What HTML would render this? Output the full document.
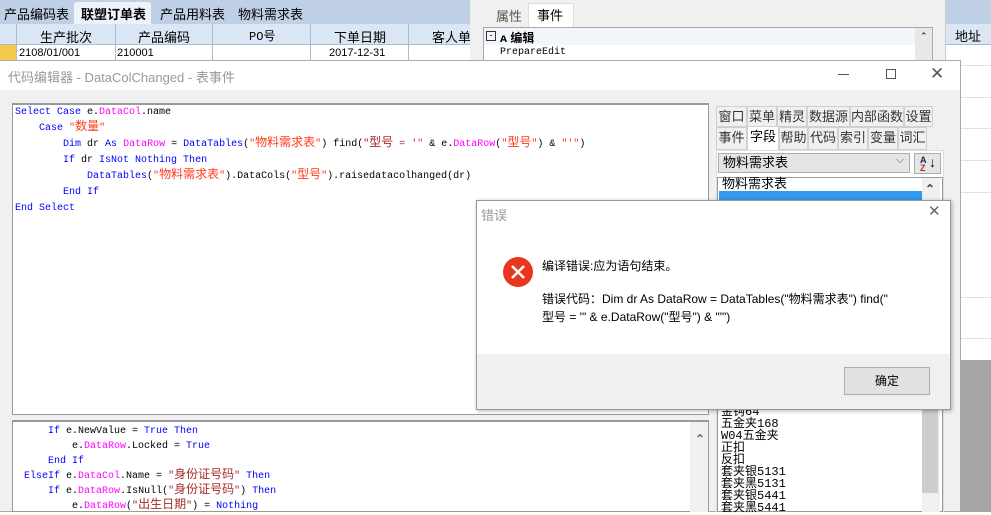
<!DOCTYPE html>
<html><head><meta charset="utf-8"><style>
*{margin:0;padding:0;box-sizing:border-box}
body{width:991px;height:512px;overflow:hidden;position:relative;background:#fff;font-family:"Liberation Sans","Noto Sans CJK SC",sans-serif;font-size:12px;color:#000}
.a{position:absolute}
.code{font-family:"Liberation Mono","Noto Sans CJK SC",monospace;font-size:10px;white-space:pre;line-height:16px}
.c{font-size:12px;line-height:10px}
.k{color:#0000ff}.m{color:#ff00ff}.s{color:#ff3a1a}.s2{color:#a52a2a}
.tab{position:absolute;border:1px solid #d0d0d0;background:#f0f0f0;font-size:13px;color:#333;text-align:center;line-height:20px}
</style></head><body>
<!-- top grid -->
<div class="a" style="left:0;top:0;width:991px;height:24px;background:#bfd0e6"></div>
<div class="a" style="left:4px;top:4px;font-size:13px">产品编码表</div>
<div class="a" style="left:74px;top:2px;width:77px;height:22px;background:#eef3fa;border-radius:3px 3px 0 0"></div>
<div class="a" style="left:81px;top:4px;font-size:13px;font-weight:bold">联塑订单表</div>
<div class="a" style="left:160px;top:4px;font-size:13px">产品用料表</div>
<div class="a" style="left:238px;top:4px;font-size:13px">物料需求表</div>
<div class="a" style="left:0;top:24px;width:991px;height:21px;background:#dbe6f4;border-bottom:1px solid #a8bcd6"></div>
<div class="a" style="left:0;top:45px;width:16px;height:15px;background:#f5c94a"></div>
<div class="a" style="left:16px;top:24px;width:1px;height:36px;background:#a8bcd6"></div>
<div class="a" style="left:115px;top:24px;width:1px;height:36px;background:#a8bcd6"></div>
<div class="a" style="left:212px;top:24px;width:1px;height:36px;background:#a8bcd6"></div>
<div class="a" style="left:310px;top:24px;width:1px;height:36px;background:#a8bcd6"></div>
<div class="a" style="left:408px;top:24px;width:1px;height:36px;background:#a8bcd6"></div>
<div class="a" style="left:40px;top:27px;font-size:13px">生产批次</div>
<div class="a" style="left:138px;top:27px;font-size:13px">产品编码</div>
<div class="a" style="left:249px;top:27px;font-size:12px;font-family:'Liberation Mono','Noto Sans CJK SC',monospace">PO号</div>
<div class="a" style="left:334px;top:27px;font-size:13px">下单日期</div>
<div class="a" style="left:432px;top:27px;font-size:13px">客人单</div>
<div class="a" style="left:955px;top:26px;font-size:13px">地址</div>
<div class="a" style="left:19px;top:47px;font-size:11px">2108/01/001</div>
<div class="a" style="left:117px;top:47px;font-size:11px">210001</div>
<div class="a" style="left:329px;top:47px;font-size:11px">2017-12-31</div>
<div class="a" style="left:960px;top:65px;width:31px;height:1px;background:#e0e0e0"></div>
<div class="a" style="left:960px;top:97px;width:31px;height:1px;background:#e0e0e0"></div>
<div class="a" style="left:960px;top:128px;width:31px;height:1px;background:#e0e0e0"></div>
<div class="a" style="left:960px;top:160px;width:31px;height:1px;background:#e0e0e0"></div>
<div class="a" style="left:960px;top:192px;width:31px;height:1px;background:#e0e0e0"></div>
<div class="a" style="left:960px;top:297px;width:31px;height:1px;background:#e0e0e0"></div>
<div class="a" style="left:960px;top:338px;width:31px;height:1px;background:#e0e0e0"></div>
<div class="a" style="left:960px;top:360px;width:31px;height:152px;background:#a6a6a6"></div>
<!-- property panel -->
<div class="a" style="left:470px;top:0;width:476px;height:61px;background:#f0f0f0;border-right:1px solid #ccc"></div>
<div class="a" style="left:496px;top:6px;font-size:13px;color:#555">属性</div>
<div class="a" style="left:528px;top:3px;width:46px;height:24px;background:#fff;border:1px solid #ddd;border-bottom:none"></div>
<div class="a" style="left:537px;top:5px;font-size:13px">事件</div>
<div class="a" style="left:483px;top:27px;width:450px;height:34px;background:#fff;border:1px solid #aaa"></div>
<div class="a" style="left:484px;top:28px;width:431px;height:17px;background:#f2f5fb"></div>
<div class="a" style="left:486px;top:31px;width:10px;height:10px;border:1px solid #333;font-size:9px;line-height:7px;text-align:center">-</div>
<div class="a" style="left:500px;top:29px;font-size:12px;font-weight:bold">ᴀ 编辑</div>
<div class="a code" style="left:500px;top:45px;font-size:10px;line-height:16px">PrepareEdit</div>
<div class="a" style="left:915px;top:28px;width:17px;height:33px;background:#e8e8e8"></div>
<div class="a" style="left:920px;top:31px;font-size:9px">⌃</div>
<!-- code editor window -->
<div class="a" style="left:0;top:60px;width:961px;height:452px;background:#f0f0f0;border:1px solid #aaa;border-left:none"></div>
<div class="a" style="left:0;top:61px;width:960px;height:29px;background:#fff"></div>
<div class="a" style="left:8px;top:67px;font-size:13px;color:#999">代码编辑器 - DataColChanged - 表事件</div>
<div class="a" style="left:838px;top:74px;width:11px;height:1px;background:#555"></div>
<div class="a" style="left:886px;top:69px;width:10px;height:10px;border:1px solid #555"></div>
<div class="a" style="left:930px;top:64px;font-size:17px;color:#555;font-weight:300">✕</div>
<div class="a" style="left:12px;top:103px;width:697px;height:312px;background:#fff;border:1px solid #999;border-top:2px solid #999"></div>
<div class="a code" style="left:15px;top:105px"><span class="k">Select Case</span> e.<span class="m">DataCol</span>.name
    <span class="k">Case</span> <span class="s">"<span class="c">数量</span>"</span>
        <span class="k">Dim</span> dr <span class="k">As</span> <span class="m">DataRow</span> = <span class="k">DataTables</span>(<span class="s">"<span class="c">物料需求表</span>"</span>) find(<span class="s2">"<span class="c">型号</span> = '</span><span class="s">"</span> &amp; e.<span class="m">DataRow</span>(<span class="s">"<span class="c">型号</span>"</span>) &amp; <span class="s">"'"</span>)
        <span class="k">If</span> dr <span class="k">IsNot Nothing Then</span>
            <span class="k">DataTables</span>(<span class="s">"<span class="c">物料需求表</span>"</span>).DataCols(<span class="s">"<span class="c">型号</span>"</span>).raisedatacolhanged(dr)
        <span class="k">End If</span>
<span class="k">End Select</span></div>
<div class="a" style="left:12px;top:420px;width:697px;height:92px;background:#fff;border:1px solid #999;border-top:2px solid #999"></div>
<div class="a" style="left:690px;top:422px;width:18px;height:90px;background:#f0f0f0"></div>
<div class="a" style="left:695px;top:432px;font-size:12px;color:#666;font-weight:bold">⌃</div>
<div class="a code" style="left:24px;top:424px;line-height:15px">    <span class="k">If</span> e.NewValue = <span class="k">True Then</span>
        e.<span class="m">DataRow</span>.Locked = <span class="k">True</span>
    <span class="k">End If</span>
<span class="k">ElseIf</span> e.<span class="m">DataCol</span>.Name = <span class="s2">"<span class="c">身份证号码</span>"</span> <span class="k">Then</span>
    <span class="k">If</span> e.<span class="m">DataRow</span>.IsNull(<span class="s2">"<span class="c">身份证号码</span>"</span>) <span class="k">Then</span>
        e.<span class="m">DataRow</span>(<span class="s2">"<span class="c">出生日期</span>"</span>) = <span class="k">Nothing</span></div>
<!-- right panel tabs -->
<div class="tab" style="left:716px;top:106px;width:31px;height:21px">窗口</div>
<div class="tab" style="left:747px;top:106px;width:30px;height:21px">菜单</div>
<div class="tab" style="left:777px;top:106px;width:30px;height:21px">精灵</div>
<div class="tab" style="left:807px;top:106px;width:43px;height:21px">数据源</div>
<div class="tab" style="left:850px;top:106px;width:54px;height:21px">内部函数</div>
<div class="tab" style="left:904px;top:106px;width:29px;height:21px">设置</div>
<div class="tab" style="left:716px;top:127px;width:31px;height:23px">事件</div>
<div class="tab" style="left:747px;top:126px;width:32px;height:25px;background:#fff;border-bottom:none;color:#000">字段</div>
<div class="tab" style="left:779px;top:127px;width:29px;height:23px">帮助</div>
<div class="tab" style="left:808px;top:127px;width:30px;height:23px">代码</div>
<div class="tab" style="left:838px;top:127px;width:30px;height:23px">索引</div>
<div class="tab" style="left:868px;top:127px;width:30px;height:23px">变量</div>
<div class="tab" style="left:898px;top:127px;width:29px;height:23px">词汇</div>
<div class="a" style="left:716px;top:150px;width:228px;height:362px;background:#fff;border:1px solid #ddd"></div>
<div class="a" style="left:718px;top:153px;width:192px;height:20px;background:#e5e5e5;border:1px solid #adadad;font-size:13px;padding-left:4px;line-height:18px">物料需求表</div>
<div class="a" style="left:896px;top:154px;font-size:11px;color:#555">⌵</div>
<div class="a" style="left:914px;top:153px;width:27px;height:21px;background:#e5e5e5;border:1px solid #adadad;font-size:9px;line-height:8px;padding:2px 0 0 5px;color:#225;font-weight:bold">A<br><span style="color:#a33">Z</span></div>
<div class="a" style="left:929px;top:154px;font-size:14px">↓</div>
<div class="a" style="left:717px;top:177px;width:226px;height:335px;background:#fff;border:1px solid #999"></div>
<div class="a" style="left:719px;top:191px;width:203px;height:10px;background:#3399ee"></div>
<div class="a" style="left:722px;top:177px;font-size:13px;line-height:14px">物料需求表</div>
<div class="a" style="left:922px;top:178px;width:18px;height:334px;background:#f0f0f0"></div>
<div class="a" style="left:925px;top:182px;font-size:12px;font-weight:bold;color:#444">⌃</div>
<div class="a" style="left:922px;top:395px;width:16px;height:98px;background:#cdcdcd"></div>
<div class="a" style="left:721px;top:406px;font-size:12px;line-height:12px;font-family:'Liberation Mono','Noto Sans CJK SC',monospace">金钩64<br>五金夹168<br>W04五金夹<br>正扣<br>反扣<br>套夹银5131<br>套夹黑5131<br>套夹银5441<br>套夹黑5441</div>
<!-- error dialog -->
<div class="a" style="left:476px;top:200px;width:475px;height:210px;background:#f0f0f0;border:1px solid #999;box-shadow:1px 1px 4px rgba(0,0,0,.3)"></div>
<div class="a" style="left:477px;top:201px;width:473px;height:153px;background:#fff"></div>
<div class="a" style="left:481px;top:205px;font-size:13px;color:#999">错误</div>
<div class="a" style="left:928px;top:202px;font-size:15px;color:#666">✕</div>
<svg class="a" style="left:502px;top:256px" width="32" height="32"><circle cx="16" cy="16" r="15" fill="#e8371f"/><path d="M10 10L22 22M22 10L10 22" stroke="#fff" stroke-width="2.5"/></svg>
<div class="a" style="left:542px;top:257px;font-size:12px">编译错误:应为语句结束。</div>
<div class="a" style="left:542px;top:290px;font-size:12px;line-height:18px">错误代码：Dim dr As DataRow = DataTables("物料需求表") find("<br>型号 = '" &amp; e.DataRow("型号") &amp; "'")</div>
<div class="a" style="left:844px;top:367px;width:86px;height:28px;background:#e1e1e1;border:1px solid #adadad;text-align:center;line-height:26px;font-size:12px">确定</div>
</body></html>
